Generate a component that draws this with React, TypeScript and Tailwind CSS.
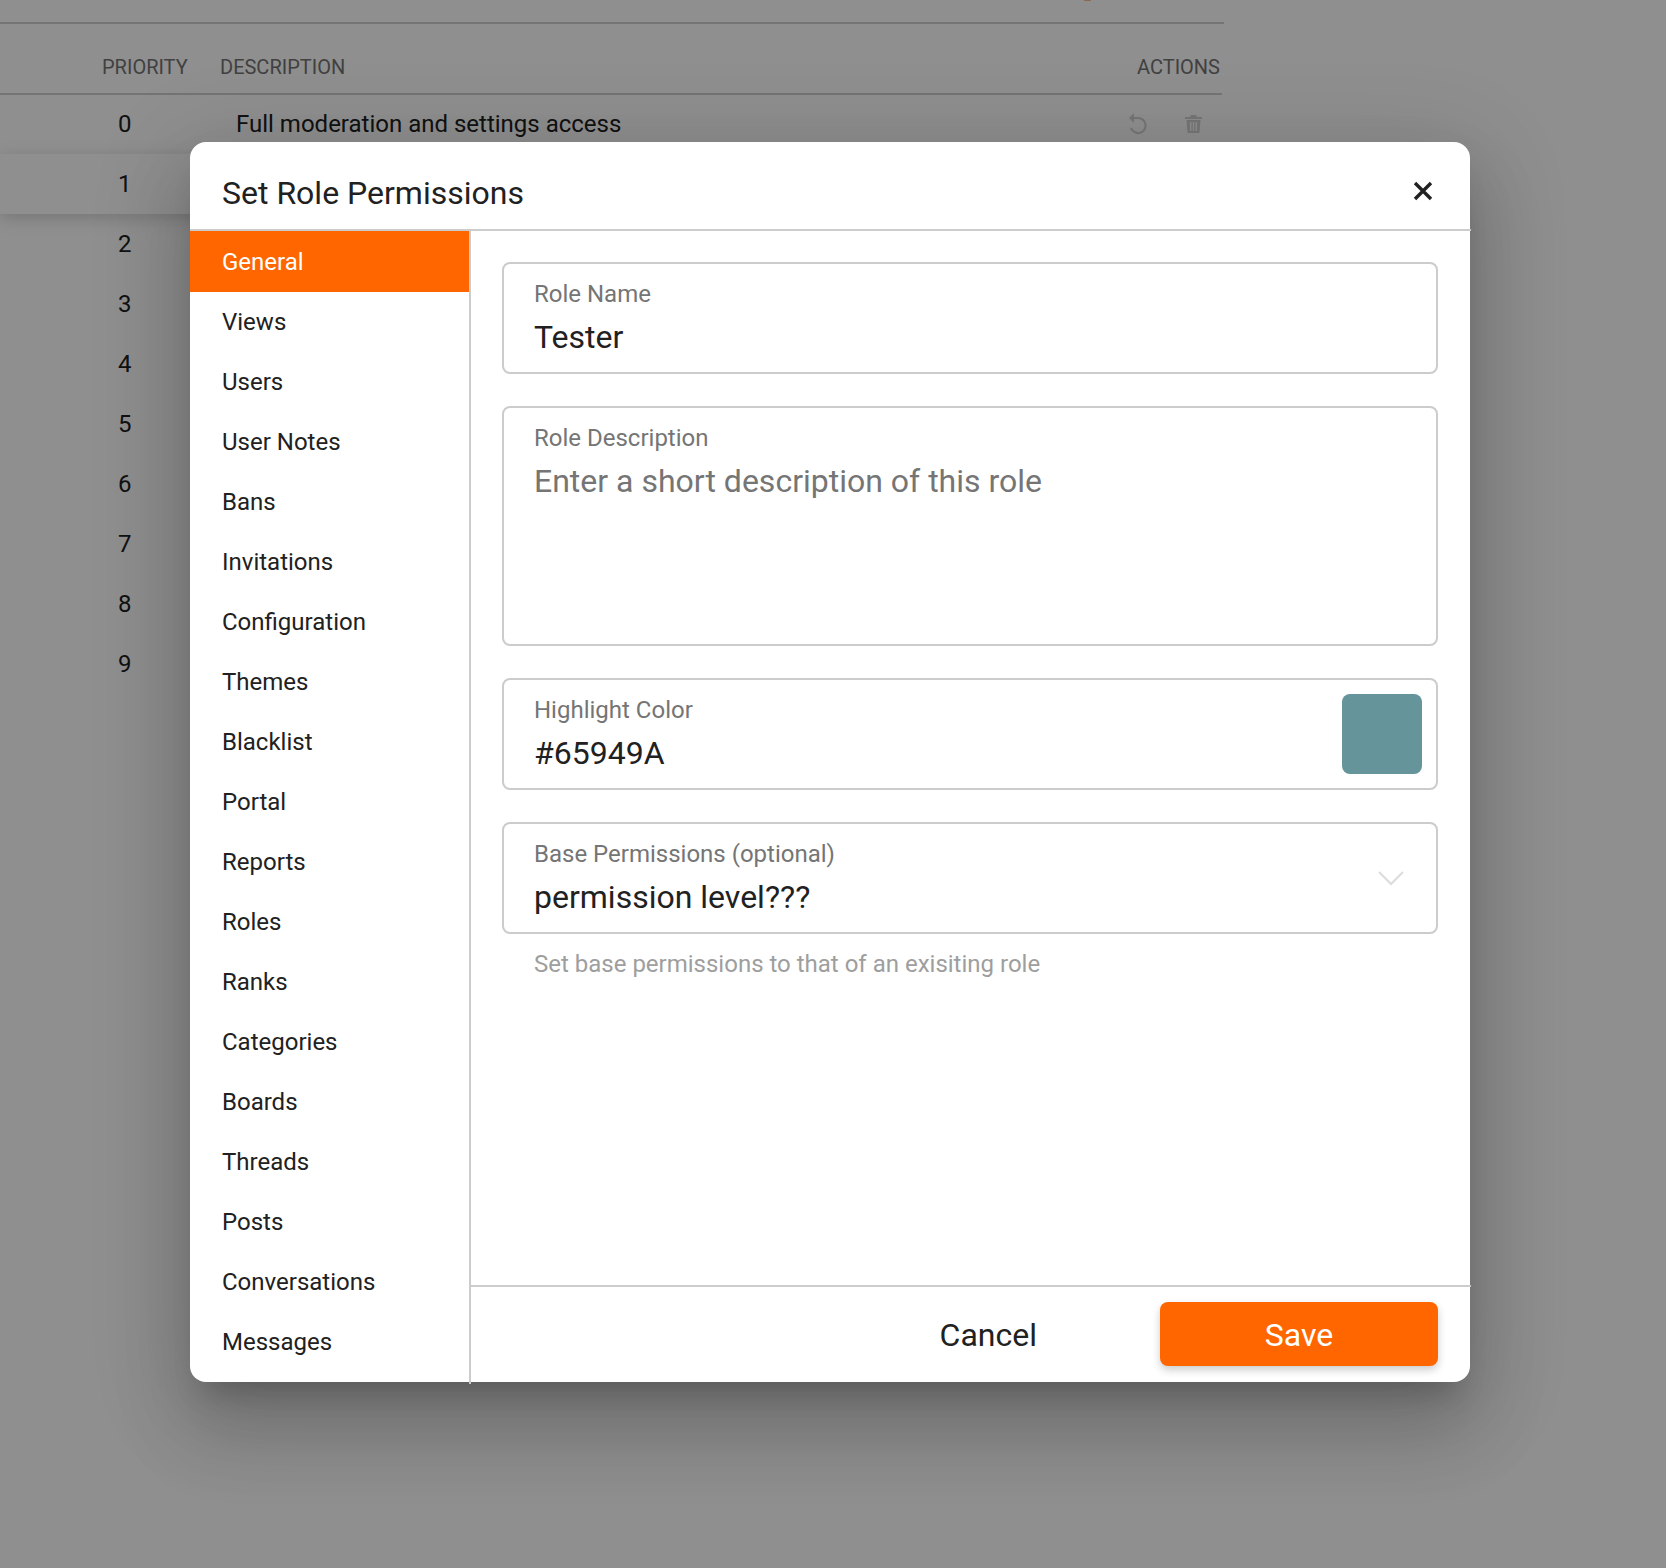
import React from "react";

const nav = ["General","Views","Users","User Notes","Bans","Invitations","Configuration","Themes","Blacklist","Portal","Reports","Roles","Ranks","Categories","Boards","Threads","Posts","Conversations","Messages"];
const rows = ["0","1","2","3","4","5","6","7","8","9"];

function Field({ label, children, className = "" }: { label: string; children: React.ReactNode; className?: string }) {
  return (
    <div className={"relative rounded-lg border-2 border-[#cccccc] pl-[30px] pt-[14px] " + className}>
      <div className="text-[24px] leading-[32px] text-[#757575]">{label}</div>
      {children}
    </div>
  );
}

export default function App() {
  return (
    <div className="relative h-[1568px] w-full overflow-hidden bg-white font-['Roboto',sans-serif] text-[#212121]">
      <div className="w-[1224px]">
        <div className="relative h-[24px] border-b-2 border-[#cfcfcf]">
          <div className="absolute left-[1084px] top-0 h-[1px] w-[7px] rounded-b-full bg-[#ff6600] opacity-50" />
        </div>
        <div className="flex h-[71px] w-[1222px] items-center border-b-2 border-[#cfcfcf] pt-[16px] text-[20px] text-[#757575]">
          <div className="w-[220px] pl-[102px]">PRIORITY</div>
          <div className="flex-1">DESCRIPTION</div>
          <div className="pr-[2px]">ACTIONS</div>
        </div>
        <div className="-mt-[1px]">
          {rows.map((r, i) => (
            <div key={r} className={"flex h-[60px] items-center text-[24px] " + (i === 1 ? "relative shadow-[0_4px_16px_rgba(0,0,0,0.18)]" : "")}>
              <div className="w-[236px] pl-[118px]">{r}</div>
              <div className="flex-1">{i === 0 ? "Full moderation and settings access" : ""}</div>
              {i === 0 && (
                <div className="-mt-[2px] flex items-center gap-[38px] pr-[22px] text-[#d2d2d2]">
                  <svg width="19" height="22" viewBox="0 0 19 22" fill="none" stroke="currentColor" strokeWidth="2.2"><path d="M5 6h5a7.5 7.5 0 1 1-7 10" /><path d="M1 6l5-5v10z" fill="currentColor" stroke="none" /></svg>
                  <svg width="17" height="19" viewBox="0 0 17 19" fill="currentColor"><path d="M0 3h5l1-2h5l1 2h5v2H0z" /><path fillRule="evenodd" d="M1.5 6h14l-1 12a1 1 0 0 1-1 1h-10a1 1 0 0 1-1-1zM5 8v9h1.4V8zM7.8 8v9h1.4V8zM10.6 8v9H12V8z" /></svg>
                </div>
              )}
            </div>
          ))}
        </div>
      </div>

      <div className="absolute inset-0 bg-black/44" />

      <div className="absolute left-[190px] top-[142px] flex h-[1240px] w-[1280px] flex-col rounded-[16px] bg-white shadow-[0_22px_30px_-14px_rgba(0,0,0,0.2),0_48px_76px_6px_rgba(0,0,0,0.14),0_18px_92px_16px_rgba(0,0,0,0.12)]">
        <div className="flex h-[89px] w-[1281px] shrink-0 items-center justify-between border-b-2 border-[#cccccc] pl-[32px] pr-[38px] pt-[15px]">
          <div className="text-[32px] leading-[40px]">Set Role Permissions</div>
          <svg className="mb-[5px]" width="20" height="20" viewBox="0 0 20 20" stroke="#212121" strokeWidth="3.4" fill="none"><path d="M2 2l16 16M18 2L2 18" /></svg>
        </div>
        <div className="flex min-h-0 flex-1">
          <div className="h-[1153px] w-[281px] shrink-0 border-r-2 border-[#cccccc]">
            {nav.map((n, i) => (
              <div key={n} className={"flex w-[279px] items-center pl-[32px] text-[24px] " + (i === 0 ? "h-[61px] bg-[#ff6600] text-white" : "h-[60px]")}>{n}</div>
            ))}
          </div>
          <div className="flex min-w-0 flex-1 flex-col">
            <div className="flex flex-1 flex-col gap-[32px] pl-[31px] pr-[32px] pt-[31px]">
              <Field label="Role Name" className="h-[112px]">
                <div className="mt-[6px] text-[32px] leading-[42px]">Tester</div>
              </Field>
              <Field label="Role Description" className="h-[240px]">
                <div className="mt-[6px] text-[32px] leading-[42px] text-[#757575]">Enter a short description of this role</div>
              </Field>
              <Field label="Highlight Color" className="h-[112px]">
                <div className="mt-[6px] text-[32px] leading-[42px]">#65949A</div>
                <div className="absolute right-[14px] top-[14px] h-[80px] w-[80px] rounded-lg bg-[#65949a]" />
              </Field>
              <div>
                <Field label="Base Permissions (optional)" className="h-[112px]">
                  <div className="mt-[6px] text-[32px] leading-[42px]">permission level???</div>
                  <svg className="absolute right-[32px] top-[46px]" width="26" height="16" viewBox="0 0 26 16" fill="none" stroke="#dcdcdc" strokeWidth="2"><path d="M1 2l12 12L25 2" /></svg>
                </Field>
                <div className="mt-[14px] pl-[32px] text-[24px] leading-[32px] text-[#9e9e9e]">Set base permissions to that of an exisiting role</div>
              </div>
            </div>
            <div className="flex h-[97px] w-[1000px] shrink-0 items-start justify-end border-t-2 border-[#cccccc] pr-[33px] pt-[15px]">
              <div className="mr-[123px] self-center pb-[15px] text-[32px]">Cancel</div>
              <div className="flex h-[64px] w-[278px] items-center justify-center rounded-lg bg-[#ff6600] pt-[1px] text-[32px] text-white shadow-[0_4px_8px_rgba(0,0,0,0.2)]">Save</div>
            </div>
          </div>
        </div>
      </div>
    </div>
  );
}
